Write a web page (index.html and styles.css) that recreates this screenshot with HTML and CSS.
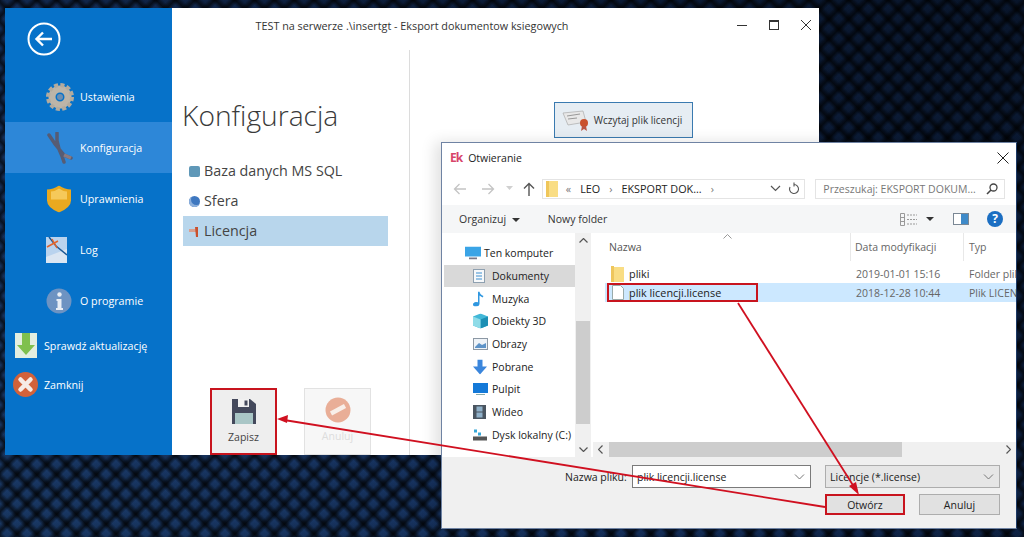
FILE: index.html
```html
<!DOCTYPE html>
<html lang="pl">
<head>
    <meta charset="UTF-8">
    <meta name="viewport" content="width=device-width, initial-scale=1.0">
    <title>Eksport dokumentow ksiegowych</title>
    <link rel="stylesheet" href="styles.css">
</head>
<body>
    <!-- Main application window -->
    <div class="app-window">
        <aside class="sidebar">
            <svg class="back-icon" width="34" height="34" viewBox="0 0 34 34"><circle cx="17" cy="17" r="15.5" fill="none" stroke="#fff" stroke-width="2"/><path d="M25 17H10M16 10.5L9.500 17l6.500 6.500" fill="none" stroke="#fff" stroke-width="2.400"/></svg>
            <nav class="side-nav">
                <a class="side-item" href="#">
                    <svg width="28" height="28" viewBox="0 0 28 28"><circle cx="14" cy="14" r="8" fill="none" stroke="#bdb5a8" stroke-width="7"/><circle cx="14" cy="14" r="12" fill="none" stroke="#b3ab9e" stroke-width="4" stroke-dasharray="4 2.280"/><circle cx="14" cy="14" r="3" fill="#6f8fb0"/></svg>
                    Ustawienia
                </a>
                <a class="side-item active" href="#">
                    <svg width="28" height="32" viewBox="0 0 28 32"><path d="M3 3l6 9 4 5M11 1v8l2 8M13 17l5 6 7 3M13 17l3 7 2 6" fill="none" stroke="#565c74" stroke-width="3.500" stroke-linecap="round"/><path d="M18 23l7 3" stroke="#8a7a80" stroke-width="3.500"/></svg>
                    Konfiguracja
                </a>
                <a class="side-item" href="#">
                    <svg width="26" height="27" viewBox="0 0 26 27"><path d="M1 4q6 0 12-4 6 4 12 4v11q0 7-12 12Q1 22 1 15z" fill="#eaa91f"/><path d="M5 6q4 0 8-3 4 3 8 3v8H5z" fill="#f6c95a"/></svg>
                    Uprawnienia
                </a>
                <a class="side-item" href="#">
                    <svg width="21" height="26" viewBox="0 0 21 26"><rect width="21" height="26" fill="#b9d3ee"/><path d="M0 20L21 12v14H0z" fill="#dbe6f2"/><path d="M3 0l7 9 11 9" fill="none" stroke="#1f5a94" stroke-width="1.500"/><path d="M1 10L12 4M6 2l5 9" stroke="#e2642c" stroke-width="1.500"/></svg>
                    Log
                </a>
                <a class="side-item" href="#">
                    <svg width="26" height="26" viewBox="0 0 26 26"><circle cx="13" cy="13" r="12.500" fill="#6d93c2"/><circle cx="13.500" cy="6.500" r="2.200" fill="#e8eef5"/><path d="M10.500 11h5v9h1.500v2h-7v-2h1.500v-7h-1z" fill="#e8eef5"/></svg>
                    O programie
                </a>
            </nav>
            <a class="side-action update" href="#">
                <svg width="22" height="25" viewBox="0 0 22 25"><rect width="22" height="25" fill="#e3eee0"/><path d="M7 0h8v12h5L11 22 2 12h5z" fill="#7fc04e"/></svg>
                Sprawdź aktualizację
            </a>
            <a class="side-action close" href="#">
                <svg width="25" height="25" viewBox="0 0 25 25"><circle cx="12.500" cy="12.500" r="12.500" fill="#d2623a"/><path d="M7.500 7.500l10 10M17.500 7.500l-10 10" stroke="#f6ece6" stroke-width="4.500" stroke-linecap="round"/></svg>
                Zamknij
            </a>
        </aside>

        <main class="app-content">
            <div class="app-titlebar">
                <span class="app-title">TEST na serwerze .\insertgt - Eksport dokumentow ksiegowych</span>
                <div class="win-controls">
                    <svg width="10" height="10" viewBox="0 0 10 10"><path d="M0 5.500h10" stroke="#333"/></svg>
                    <svg width="10" height="10" viewBox="0 0 10 10"><rect x=".5" y=".5" width="9" height="9" fill="none" stroke="#333"/><path d="M0 1.500h10" stroke="#333"/></svg>
                    <svg width="10" height="10" viewBox="0 0 10 10"><path d="M0 0l10 10M10 0L0 10" stroke="#333"/></svg>
                </div>
            </div>
            <div class="app-columns">
                <section class="config-panel">
                    <h1>Konfiguracja</h1>
                    <ul class="config-list">
                        <li><span class="dot-icon db"></span>Baza danych MS SQL</li>
                        <li><span class="dot-icon globe"></span>Sfera</li>
                        <li class="selected">
                            <svg class="lic-icon" width="11" height="11" viewBox="0 0 11 11"><path d="M0 3h7v3H0z" fill="#d8a090"/><path d="M6 1h3v10H7z" fill="#c9512e"/></svg>
                            Licencja
                        </li>
                    </ul>
                    <div class="config-actions">
                        <button class="big-btn marked">
                            <svg width="24" height="25" viewBox="0 0 24 25"><path d="M0 0h18l6 5v20H0z" fill="#44495c"/><path d="M6 0h11v8H6z" fill="#f1f1f1"/><path d="M12.500 1.500h3v5h-3z" fill="#44495c"/><path d="M3 14h18v11H3z" fill="#a9c6c6"/></svg>
                            <span>Zapisz</span>
                        </button>
                        <button class="big-btn disabled">
                            <svg width="26" height="26" viewBox="0 0 26 26"><circle cx="13" cy="13" r="12.500" fill="#e9ae97"/><path d="M6 16.500L20 9" stroke="#f8efe9" stroke-width="4.500"/></svg>
                            <span>Anuluj</span>
                        </button>
                    </div>
                </section>
                <section class="license-panel">
                    <button class="load-btn">
                        <svg width="30" height="22" viewBox="0 0 30 22"><path d="M1 4l20-2 3 11-18 3z" fill="#e8e8e8" stroke="#aaa" stroke-width=".7"/><path d="M5 7l13-2M6 10l9-1" stroke="#999"/><circle cx="22" cy="14" r="4" fill="#c9512e"/><path d="M20 17l-1 5 3-2 3 2-1-5z" fill="#b54"/></svg>
                        Wczytaj plik licencji
                    </button>
                </section>
            </div>
        </main>
    </div>

    <!-- File open dialog -->
    <div class="dialog">
        <div class="dlg-title">
            <b class="dlg-logo">Ek</b>
            <span>Otwieranie</span>
            <svg class="dlg-close" width="12" height="12" viewBox="0 0 12 12"><path d="M.5.5l11 11M11.500.5l-11 11" stroke="#222"/></svg>
        </div>
        <div class="dlg-nav">
            <div class="nav-arrows">
                <svg width="14" height="12" viewBox="0 0 14 12"><path d="M13 6H2M6.500 1L1.500 6l5 5" fill="none" stroke="#c4c4c4" stroke-width="1.300"/></svg>
                <svg width="14" height="12" viewBox="0 0 14 12"><path d="M1 6h11M7.500 1l5 5-5 5" fill="none" stroke="#c4c4c4" stroke-width="1.300"/></svg>
                <svg class="mini" width="7" height="5" viewBox="0 0 7 5"><path d="M0 0h7L3.500 4z" fill="#d0d0d0"/></svg>
                <svg width="12" height="14" viewBox="0 0 12 14"><path d="M6 14V2M1 6.500l5-5 5 5" fill="none" stroke="#555" stroke-width="1.400"/></svg>
            </div>
            <div class="crumbs">
                <svg class="crumb-folder" width="12" height="16" viewBox="0 0 12 16"><path d="M0 0h12v16H0z" fill="#f9dd84"/><path d="M0 0h3v16H0z" fill="#efc65a"/></svg>
                <span class="crumb-sep">«</span><span>LEO</span><span class="crumb-sep">›</span><span>EKSPORT DOK...</span><span class="crumb-sep">›</span>
                <svg class="crumb-drop" width="11" height="7" viewBox="0 0 11 7"><path d="M1 1l4.500 4.500L10 1" fill="none" stroke="#555" stroke-width="1.200"/></svg>
                <svg class="crumb-refresh" width="12" height="13" viewBox="0 0 12 13"><path d="M6 2.500a4.500 4.500 0 1 1-4 2.500M6 .5v4" fill="none" stroke="#555" stroke-width="1.100"/></svg>
            </div>
            <div class="search">
                <span>Przeszukaj: EKSPORT DOKUM...</span>
                <svg width="12" height="12" viewBox="0 0 12 12"><circle cx="7.500" cy="4.500" r="3.500" fill="none" stroke="#444" stroke-width="1.300"/><path d="M5 7l-4 4" stroke="#444" stroke-width="1.600"/></svg>
            </div>
        </div>
        <div class="dlg-toolbar">
            <span class="tool">Organizuj <i class="caret"></i></span>
            <span class="tool new-folder">Nowy folder</span>
            <div class="tool-icons">
                <svg width="17" height="13" viewBox="0 0 17 13"><path d="M.5.5h4v12h-4zM.5 4.500h4M.5 8.500h4" fill="none" stroke="#999"/><path d="M7 2h10M7 6.500h10M7 11h10" stroke="#999" stroke-dasharray="2 1"/></svg>
                <i class="caret"></i>
                <svg class="pane" width="16" height="12" viewBox="0 0 16 12"><rect x=".5" y=".5" width="15" height="11" fill="#fff" stroke="#7a8794"/><rect x="8" y="1" width="7" height="10" fill="#3e8ac9"/></svg>
                <svg width="16" height="16" viewBox="0 0 16 16"><circle cx="8" cy="8" r="8" fill="#1b6ec2"/><text x="8" y="12" class="help-mark" text-anchor="middle">?</text></svg>
            </div>
        </div>
        <div class="dlg-body">
            <ul class="tree">
                <li class="tree-root">
                    <svg width="16" height="13" viewBox="0 0 16 13"><rect width="16" height="10" fill="#3aa4e6"/><path d="M4 12h8" stroke="#778" stroke-width="2"/></svg>
                    Ten komputer
                </li>
                <li class="current">
                    <svg width="12" height="14" viewBox="0 0 12 14"><rect x=".5" y=".5" width="11" height="13" fill="#f7f9fb" stroke="#8ea0b0"/><path d="M3 4h6M3 7h6M3 10h6" stroke="#3c8fd0"/></svg>
                    Dokumenty
                </li>
                <li>
                    <svg width="12" height="15" viewBox="0 0 12 15"><path d="M5 0h1.500q.5 3 4 4.500l-1 1.500L6.500 4v8.500Q6 15 3 15 0 15 0 13t3-2.500l2 .3z" fill="#2f97e0"/></svg>
                    Muzyka
                </li>
                <li>
                    <svg width="15" height="15" viewBox="0 0 15 15"><path d="M7.500 0L15 3v9l-7.500 3L0 12V3z" fill="#42b8d8"/><path d="M7.500 6L15 3v9l-7.500 3z" fill="#1c8fb4"/><path d="M0 3l7.500 3v9L0 12z" fill="#8fdce8"/></svg>
                    Obiekty 3D
                </li>
                <li>
                    <svg width="15" height="12" viewBox="0 0 15 12"><rect x=".5" y=".5" width="14" height="11" fill="#eef3f8" stroke="#8c98a4"/><path d="M2 9l4-4 3 2 4-2v5H2z" fill="#5d93c8"/></svg>
                    Obrazy
                </li>
                <li>
                    <svg width="14" height="15" viewBox="0 0 14 15"><path d="M4.500 0h5v7H14l-7 8-7-8h4.500z" fill="#3b86dc"/></svg>
                    Pobrane
                </li>
                <li>
                    <svg width="15" height="12" viewBox="0 0 15 12"><rect width="15" height="10" fill="#1479d8"/><path d="M3 11.500h9" stroke="#8aa"/></svg>
                    Pulpit
                </li>
                <li>
                    <svg width="13" height="14" viewBox="0 0 13 14"><rect width="13" height="14" fill="#4a5560"/><rect x="3.500" y="1.500" width="6" height="5" fill="#8fb0c8"/><rect x="3.500" y="7.500" width="6" height="5" fill="#8fb0c8"/></svg>
                    Wideo
                </li>
                <li>
                    <svg width="14" height="13" viewBox="0 0 14 13"><path d="M0 8h14v4H0z" fill="#555"/><path d="M1 1h3v3H1zM5 4h3v3H5z" fill="#36a7d8"/></svg>
                    Dysk lokalny (C:)
                </li>
            </ul>
            <div class="tree-scroll">
                <svg width="9" height="5" viewBox="0 0 9 5"><path d="M.5 4.500l4-4 4 4" fill="none" stroke="#555" stroke-width="1.200"/></svg>
                <div class="tree-thumb"></div>
                <svg width="9" height="5" viewBox="0 0 9 5"><path d="M.5.5l4 4 4-4" fill="none" stroke="#555" stroke-width="1.200"/></svg>
            </div>
            <div class="files">
                <div class="file-head">
                    <span class="col-name">Nazwa</span>
                    <span class="col-date">Data modyfikacji</span>
                    <span class="col-type">Typ</span>
                    <svg class="sort-mark" width="9" height="5" viewBox="0 0 9 5"><path d="M.5 4.500l4-4 4 4" fill="none" stroke="#999"/></svg>
                </div>
                <div class="file-row">
                    <span class="file-name">
                        <svg width="13" height="16" viewBox="0 0 13 16"><path d="M0 1h13v15H0z" fill="#f9dd84"/><path d="M0 0h3v16H0z" fill="#eec65c"/></svg>
                        pliki
                    </span>
                    <span class="col-date">2019-01-01 15:16</span>
                    <span class="col-type">Folder plików</span>
                </div>
                <div class="file-row selected">
                    <span class="file-name marked-file">
                        <svg width="12" height="15" viewBox="0 0 12 15"><path d="M.5.5h8l3 3v11H.5z" fill="#fff" stroke="#9aa"/></svg>
                        plik licencji.license
                    </span>
                    <span class="col-date">2018-12-28 10:44</span>
                    <span class="col-type">Plik LICENSE</span>
                </div>
                <div class="h-scroll">
                    <svg width="5" height="9" viewBox="0 0 5 9"><path d="M4.500.5l-4 4 4 4" fill="none" stroke="#555" stroke-width="1.200"/></svg>
                    <div class="h-thumb"></div>
                    <svg width="5" height="9" viewBox="0 0 5 9"><path d="M.5.5l4 4-4 4" fill="none" stroke="#555" stroke-width="1.200"/></svg>
                </div>
            </div>
        </div>
        <div class="dlg-footer">
            <div class="name-row">
                <label>Nazwa pliku:</label>
                <div class="name-input">plik licencji.license<svg width="11" height="6" viewBox="0 0 11 6"><path d="M1 .5l4.500 4.500L10 .5" fill="none" stroke="#777"/></svg></div>
                <div class="type-select">Licencje (*.license)<svg width="11" height="6" viewBox="0 0 11 6"><path d="M1 .5l4.500 4.500L10 .5" fill="none" stroke="#777"/></svg></div>
            </div>
            <div class="btn-row">
                <button class="dlg-btn open">Otwórz</button>
                <button class="dlg-btn">Anuluj</button>
            </div>
        </div>
    </div>

    <!-- Red annotation arrows over both windows -->
    <svg class="arrows" width="1024" height="537" viewBox="0 0 1024 537">
        <path d="M738 303L856 490" stroke="#d01020" stroke-width="1.800"/>
        <path d="M859 495l-10-9 7-4z" fill="#d01020"/>
        <path d="M825 507L284 420" stroke="#d01020" stroke-width="1.800"/>
        <path d="M277 419l11-4-1 8z" fill="#d01020"/>
    </svg>
</body>
</html>
```

FILE: styles.css
```css
* {
    box-sizing: border-box;
}

html, body {
    height: 100%;
}

body {
    margin: 0;
    overflow: hidden;
    position: relative;
    font-family: "Open Sans", "Noto Sans", sans-serif;
    color: #333;
    background-color: #0c1c38;
    background-image:
        repeating-linear-gradient(45deg, rgba(0, 0, 0, 0.7) 0, rgba(0, 0, 0, 0.55) 2px, rgba(0, 0, 0, 0.2) 5px, rgba(0, 0, 0, 0.15) 10px, rgba(0, 0, 0, 0.7) 14px),
        repeating-linear-gradient(-45deg, rgba(0, 0, 0, 0.7) 0, rgba(0, 0, 0, 0.55) 2px, rgba(0, 0, 0, 0.2) 5px, rgba(0, 0, 0, 0.15) 10px, rgba(0, 0, 0, 0.7) 14px),
        linear-gradient(35deg, #24508f 0%, #1e4482 35%, #122b56 65%, #0d2040 100%);
}

a {
    color: inherit;
    text-decoration: none;
}

button {
    font-family: inherit;
}

/* Main window */
.app-window {
    position: absolute;
    left: 5px;
    top: 8px;
    width: 814px;
    height: 447px;
    display: flex;
    background: #fff;
}

.sidebar {
    width: 167px;
    flex-shrink: 0;
    background: #0672c9;
    color: #fff;
    font-size: 10.7px;
    padding-top: 14px;
}

.back-icon {
    display: block;
    margin-left: 22px;
    margin-bottom: 15px;
}

.side-item {
    height: 51px;
    padding-left: 75px;
    display: flex;
    align-items: center;
    position: relative;
}

.side-item svg {
    position: absolute;
    left: 41px;
    top: 50%;
    transform: translateY(-50%);
}

.side-item.active {
    background: #2d87d8;
}

.side-action {
    display: flex;
    align-items: center;
    padding-left: 39px;
    position: relative;
    height: 39px;
}

.side-action svg {
    position: absolute;
    left: 10px;
    top: 7px;
}

.side-action.close svg {
    left: 8px;
}

.app-content {
    flex: 1;
    display: flex;
    flex-direction: column;
    min-width: 0;
}

.app-titlebar {
    height: 34px;
    display: flex;
    align-items: center;
    font-size: 10.8px;
    padding-right: 8px;
}

.app-title {
    width: 480px;
    text-align: center;
}

.win-controls {
    margin-left: auto;
    display: flex;
    gap: 22px;
}

.app-columns {
    flex: 1;
    display: flex;
    min-height: 0;
}

.config-panel {
    width: 238px;
    border-right: 1px solid #dcdcdc;
    margin-top: 8px;
    padding-left: 10px;
    display: flex;
    flex-direction: column;
}

.config-panel h1 {
    margin: 0;
    padding-top: 48px;
    font-size: 28.2px;
    font-weight: 300;
    line-height: 34px;
    color: #3a3a3a;
}

.config-list {
    list-style: none;
    margin: 24px 0 0 1px;
    padding: 0;
    width: 205px;
    font-size: 14.3px;
    color: #444;
}

.config-list li {
    height: 30px;
    line-height: 30px;
    display: flex;
    align-items: center;
    padding-left: 6px;
    gap: 4px;
}

.config-list li.selected {
    background: #b8d6ec;
}

.dot-icon {
    width: 11px;
    height: 11px;
    background: #5f98b8;
    border-radius: 2px;
}

.dot-icon.globe {
    border-radius: 50%;
    background: #3f78c0;
    box-shadow: inset 2px -2px 0 #8db0dc;
}

.config-actions {
    margin-top: auto;
    display: flex;
    gap: 27px;
    padding-left: 28px;
}

.big-btn {
    width: 67px;
    height: 67px;
    border: 1px solid #e2e2e2;
    background: #eeeeee;
    padding: 8px 0 0;
    display: flex;
    flex-direction: column;
    align-items: center;
    gap: 6px;
    font-size: 10.5px;
    color: #444;
}

.big-btn.marked {
    border: 2px solid #c8141e;
    padding-top: 9px;
}

.big-btn.disabled {
    background: #f7f7f7;
    color: #ddd;
}

.license-panel {
    flex: 1;
    padding: 60px 0 0 144px;
}

.load-btn {
    width: 139px;
    height: 36px;
    border: 1px solid #3a7ab0;
    background: #e6edf3;
    display: flex;
    align-items: center;
    justify-content: center;
    gap: 2px;
    padding: 0 3px 0 0;
    font-size: 10px;
    color: #333;
}

/* Open file dialog */
.dialog {
    position: absolute;
    left: 441px;
    top: 142px;
    width: 576px;
    height: 387px;
    background: #fff;
    border: 1px solid #6f83a3;
    border-right-color: #1d3a66;
    display: flex;
    flex-direction: column;
    font-size: 10.5px;
    box-shadow: -6px 0 14px rgba(0, 0, 0, 0.12);
}

.dlg-title {
    height: 29px;
    display: flex;
    align-items: center;
    padding-left: 8px;
    gap: 6px;
    color: #222;
}

.dlg-logo {
    color: #d7456a;
    font-size: 12px;
    letter-spacing: -1px;
}

.dlg-close {
    margin-left: auto;
    margin-right: 7px;
}

.dlg-nav {
    height: 33px;
    display: flex;
    align-items: center;
    padding: 0 11px;
}

.nav-arrows {
    display: flex;
    align-items: center;
    gap: 14px;
    width: 89px;
}

.nav-arrows .mini {
    margin: 0 -4px 0 -3px;
}

.crumbs {
    width: 264px;
    height: 20px;
    border: 1px solid #e4e4e4;
    display: flex;
    align-items: center;
    gap: 9px;
    padding-left: 3px;
    font-size: 10.8px;
    color: #222;
}

.crumb-folder {
    margin-right: -1px;
}

.crumb-sep {
    color: #777;
}

.crumb-drop {
    margin-left: auto;
    margin-right: -2px;
}

.crumb-refresh {
    margin-right: 4px;
}

.search {
    width: 190px;
    height: 20px;
    margin-left: 10px;
    border: 1px solid #e4e4e4;
    display: flex;
    align-items: center;
    justify-content: space-between;
    padding: 0 6px 0 7px;
    color: #777;
}

.dlg-toolbar {
    height: 28px;
    background: #f5f6f7;
    display: flex;
    align-items: center;
    padding-left: 17px;
    color: #333;
}

.new-folder {
    margin-left: 28px;
}

.caret {
    display: inline-block;
    border-left: 4px solid transparent;
    border-right: 4px solid transparent;
    border-top: 4px solid #333;
    margin-left: 3px;
    vertical-align: middle;
}

.tool-icons {
    margin-left: auto;
    padding-right: 13px;
    display: flex;
    align-items: center;
}

.tool-icons .caret {
    margin: 0 0 0 9px;
}

.tool-icons .pane {
    margin: 0 18px 0 19px;
}

.help-mark {
    font-size: 12px;
    font-weight: 700;
    fill: #fff;
}

.dlg-body {
    flex: 1;
    display: flex;
    min-height: 0;
}

.tree {
    list-style: none;
    margin: 0;
    padding: 9px 0 0 2px;
    width: 133px;
    flex-shrink: 0;
    color: #222;
}

.tree li {
    height: 22.7px;
    display: flex;
    align-items: center;
    position: relative;
    padding-left: 48px;
    white-space: nowrap;
    overflow: hidden;
}

.tree li svg {
    position: absolute;
    left: 29px;
    top: 50%;
    transform: translateY(-50%);
}

.tree li.tree-root {
    padding-left: 40px;
}

.tree li.tree-root svg {
    left: 21px;
}

.tree li.current {
    background: #d9d9d9;
}

.tree-scroll {
    width: 16px;
    flex-shrink: 0;
    background: #f0f0f0;
    display: flex;
    flex-direction: column;
    align-items: center;
    padding: 5px 0;
}

.tree-thumb {
    width: 14px;
    height: 103px;
    background: #cdcdcd;
    margin: 78px 0 auto;
}

.files {
    flex: 1;
    min-width: 0;
    display: flex;
    flex-direction: column;
    position: relative;
    padding-left: 3px;
    white-space: nowrap;
}

.file-head {
    height: 28px;
    display: grid;
    grid-template-columns: 256px 113px 1fr;
    align-items: center;
    color: #555;
    position: relative;
}

.file-head .col-name {
    padding-left: 15px;
}

.sort-mark {
    position: absolute;
    left: 129px;
    top: 1px;
}

.file-row {
    height: 19px;
    display: grid;
    grid-template-columns: 245px 113px 1fr;
    align-items: center;
    overflow: hidden;
    margin-left: 11px;
}

.file-head + .file-row {
    margin-top: 3px;
}

.file-name {
    color: #222;
    display: flex;
    align-items: center;
    gap: 5px;
    font-size: 10.85px;
    padding-left: 6px;
}

.file-row .col-date {
    padding-left: 6px;
}

.file-row .col-type {
    padding-left: 6px;
}

.col-date, .col-type {
    color: #666;
    overflow: hidden;
}

.file-head .col-date, .file-head .col-type {
    border-left: 1px solid #e8e8e8;
    padding-left: 4px;
    height: 28px;
    line-height: 28px;
}

.file-head .col-type {
    padding-left: 5px;
}

.file-row.selected {
    background: #cce8ff;
}

.marked-file {
    outline: 2px solid #c8141e;
    outline-offset: -2px;
    width: 151px;
    height: 19px;
    margin-left: 2px;
    padding-left: 5px;
}

.h-scroll {
    position: absolute;
    left: 2px;
    right: 0;
    bottom: 0;
    height: 15px;
    background: #f0f0f0;
    display: flex;
    align-items: center;
    padding: 0 5px;
}

.h-thumb {
    width: 293px;
    height: 15px;
    background: #cdcdcd;
    margin: 0 auto 0 6px;
}

.dlg-footer {
    height: 71px;
    background: #f0f0f0;
    padding: 8px 16px 0 0;
}

.name-row {
    display: flex;
    align-items: center;
    color: #222;
}

.name-row label {
    margin-left: 123px;
    width: 67px;
}

.name-input, .type-select {
    height: 23px;
    display: flex;
    align-items: center;
    justify-content: space-between;
    padding: 0 5px 0 4px;
}

.name-input {
    width: 179px;
    background: #fff;
    border: 1px solid #7a7a7a;
    margin-right: 14px;
}

.type-select {
    width: 175px;
    background: #e6e6e6;
    border: 1px solid #adadad;
}

.btn-row {
    display: flex;
    justify-content: flex-end;
    gap: 14px;
    margin-top: 6px;
}

.dlg-btn {
    width: 81px;
    height: 21px;
    background: #e1e1e1;
    border: 1px solid #adadad;
    padding: 0;
    font-size: 10.5px;
    color: #222;
}

.dlg-btn.open {
    width: 80px;
    border: 2px solid #c8141e;
}

.arrows {
    position: absolute;
    left: 0;
    top: 0;
    pointer-events: none;
}
```
